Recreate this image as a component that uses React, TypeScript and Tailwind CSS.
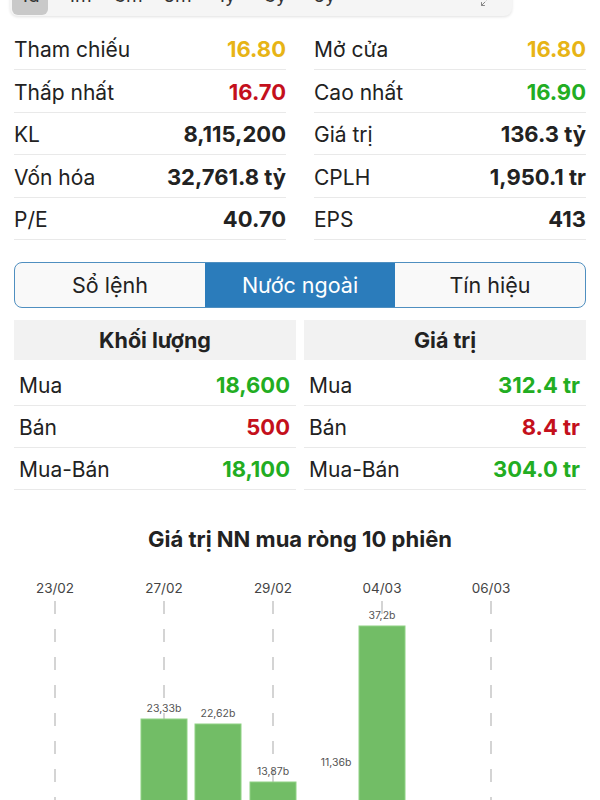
import { Maximize2 } from "lucide-react";

const font = { fontFamily: "Inter, 'Noto Sans', sans-serif" };

type Cell = { label: string; value: string; color?: string };

const stats: [Cell, Cell][] = [
  [
    { label: "Tham chiếu", value: "16.80", color: "text-[#e7b416]" },
    { label: "Mở cửa", value: "16.80", color: "text-[#e7b416]" },
  ],
  [
    { label: "Thấp nhất", value: "16.70", color: "text-[#c4101c]" },
    { label: "Cao nhất", value: "16.90", color: "text-[#22ad22]" },
  ],
  [
    { label: "KL", value: "8,115,200" },
    { label: "Giá trị", value: "136.3 tỷ" },
  ],
  [
    { label: "Vốn hóa", value: "32,761.8 tỷ" },
    { label: "CPLH", value: "1,950.1 tr" },
  ],
  [
    { label: "P/E", value: "40.70" },
    { label: "EPS", value: "413" },
  ],
];

const foreign: [Cell, Cell][] = [
  [
    { label: "Mua", value: "18,600", color: "text-[#22ad22]" },
    { label: "Mua", value: "312.4 tr", color: "text-[#22ad22]" },
  ],
  [
    { label: "Bán", value: "500", color: "text-[#c4101c]" },
    { label: "Bán", value: "8.4 tr", color: "text-[#c4101c]" },
  ],
  [
    { label: "Mua-Bán", value: "18,100", color: "text-[#22ad22]" },
    { label: "Mua-Bán", value: "304.0 tr", color: "text-[#22ad22]" },
  ],
];

const ranges = ["1d", "1m", "3m", "6m", "1y", "3y", "5y"];

const dates = [
  { x: 55, label: "23/02" },
  { x: 164, label: "27/02" },
  { x: 273, label: "29/02" },
  { x: 382, label: "04/03" },
  { x: 491, label: "06/03" },
];

// bars: center x, top y in page coords, label
const bars = [
  { x: 164, top: 721, label: "23,33b" },
  { x: 218, top: 726, label: "22,62b" },
  { x: 273, top: 784, label: "13,87b" },
  { x: 382, top: 628, label: "37,2b" },
];

function Chart() {
  const top = 570;
  return (
    <svg width="600" height="240" viewBox={`0 ${top} 600 240`} className="block">
      {dates.map((d) => (
        <g key={d.label}>
          <text x={d.x} y={595} textAnchor="middle" fontSize="13.5" fill="#444" style={font}>
            {d.label}
          </text>
          <line x1={d.x} y1={603} x2={d.x} y2={810} stroke="#bdbdbd" strokeWidth="1.3" strokeDasharray="13 15" />
        </g>
      ))}
      {bars.map((b) => (
        <g key={b.label}>
          <rect x={b.x - 23} y={b.top} width="46" height={810 - b.top} fill="#72bd66" stroke="#8fd284" strokeWidth="1" />
          <text x={b.x} y={b.top - 7} textAnchor="middle" fontSize="10.5" fill="#555" style={font}>
            {b.label}
          </text>
        </g>
      ))}
      <text x={336} y={768} textAnchor="middle" fontSize="10.5" fill="#555" style={font}>
        11,36b
      </text>
    </svg>
  );
}

export default function App() {
  return (
    <div className="w-[600px] h-[800px] overflow-hidden bg-white text-[#222]" style={font}>
      {/* range bar */}
      <div className="mx-[10px] mt-[-24px] h-[40px] rounded-lg bg-[#f5f5f5] shadow-[0_1px_3px_rgba(0,0,0,0.12)] flex items-center px-[2px] w-[502px]">
        {ranges.map((r, i) => (
          <div
            key={r}
            className={`h-[38px] flex items-center justify-center text-[19px] text-[#333] rounded-md ${
              i === 0 ? "w-[36px] bg-[#c9c9c9]" : "w-[49px]"
            } ${i === 1 ? "ml-[7px]" : ""}`}
          >
            {r}
          </div>
        ))}
        <div className="ml-auto mr-[18px] mt-[10px] text-[#888]">
          <Maximize2 size={12} />
        </div>
      </div>

      {/* stats */}
      <div className="mt-[11.5px] px-[14px] grid grid-cols-2 gap-x-[28px]">
        {stats.map((row, ri) =>
          row.map((c, ci) => (
            <div
              key={`${ri}-${ci}`}
              className="h-[42.5px] border-b border-[#e9e9e9] flex items-center justify-between pt-[3px]"
            >
              <span className="text-[21px] text-[#222]">{c.label}</span>
              <span className={`text-[22px] font-bold ${c.color ?? "text-[#222]"}`}>{c.value}</span>
            </div>
          ))
        )}
      </div>

      {/* segmented control */}
      <div className="mt-[22px] mx-[14px] h-[46px] grid grid-cols-3 rounded-lg border-[1.5px] border-[#4f8fc0] overflow-hidden bg-[#f9f9f9]">
        <div className="flex items-center justify-center text-[21.5px] text-[#222]">Sổ lệnh</div>
        <div className="flex items-center justify-center text-[21.5px] text-white bg-[#2b7cbb]">Nước ngoài</div>
        <div className="flex items-center justify-center text-[21.5px] text-[#222]">Tín hiệu</div>
      </div>

      {/* foreign table */}
      <div className="mt-[12px] px-[14px] grid grid-cols-2 gap-x-[8px]">
        <div className="h-[40px] bg-[#f2f2f2] flex items-center justify-center text-[21.5px] font-bold">Khối lượng</div>
        <div className="h-[40px] bg-[#f2f2f2] flex items-center justify-center text-[21.5px] font-bold">Giá trị</div>
      </div>
      <div className="mt-[4px] px-[14px] grid grid-cols-2 gap-x-[8px]">
        {foreign.map((row, ri) =>
          row.map((c, ci) => (
            <div
              key={`${ri}-${ci}`}
              className="h-[42px] border-b border-[#e9e9e9] flex items-center justify-between pl-[5px] pr-[6px] pt-[2px]"
            >
              <span className="text-[21px] text-[#222]">{c.label}</span>
              <span className={`text-[22px] font-bold ${c.color}`}>{c.value}</span>
            </div>
          ))
        )}
      </div>

      {/* chart */}
      <div className="mt-[33px] text-center text-[22px] font-bold text-[#222]">Giá trị NN mua ròng 10 phiên</div>
      <div className="mt-[12px]">
        <Chart />
      </div>
    </div>
  );
}
